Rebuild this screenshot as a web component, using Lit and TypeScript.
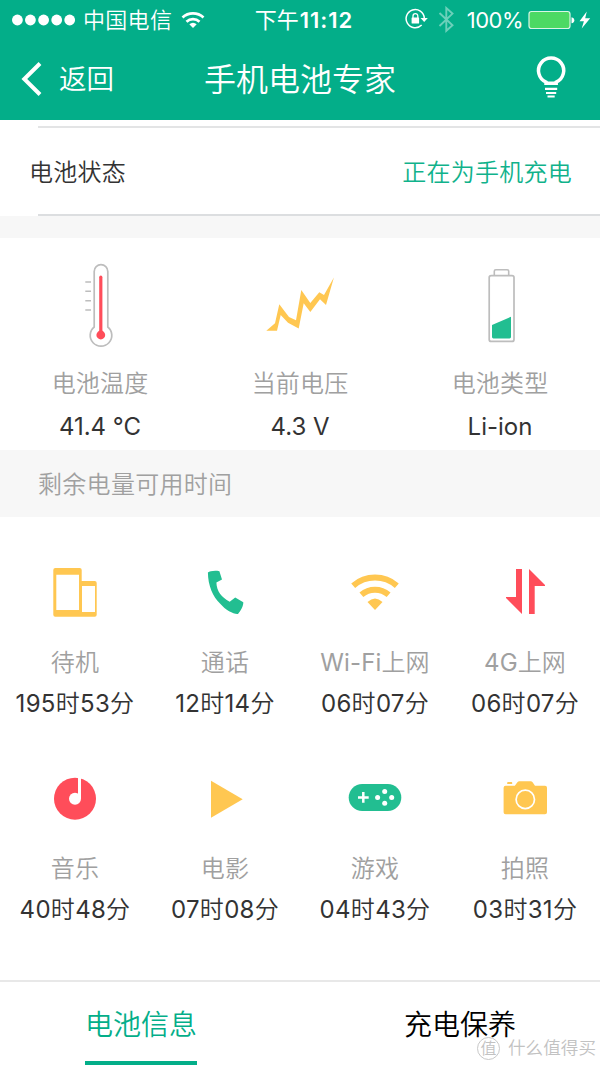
import { LitElement, html, svg, css } from "lit";
import { customElement, property } from "lit/decorators.js";

const GREY = "#bdbdbd";
const RED = "#ff4d5a";
const GREEN = "#22be91";
const AMBER = "#ffc751";

const icons: Record<string, unknown> = {
  thermometer: html`<svg width="36" height="88" viewBox="82 262 36 88" fill="none">
    <path d="M94.2 327V271.4a6.8 6.8 0 0 1 13.6 0V327a10.8 10.8 0 1 1-13.6 0Z" stroke=${GREY} stroke-width="1.7"/>
    <path d="M85.3 282h5.7M85.3 291.3h5.7M85.3 300.7h5.7M85.3 310h5.7" stroke=${GREY} stroke-width="1.6"/>
    <path d="M100.8 277.2V335" stroke=${RED} stroke-width="3.2" stroke-linecap="round"/>
    <circle cx="100.8" cy="335" r="4.4" fill=${RED}/></svg>`,
  voltage: html`<svg width="72" height="88" viewBox="264 262 72 88">
    <path fill=${AMBER} d="M266.3 330.8 275 323.3 279.3 304.3 289 317 296 320.3 301.3 290 310.3 303 319.3 292.3 324 295 333.9 277.5 326 304.9 320 299.3 310.3 312 303.7 303.3 298.7 328.4 288 322.7 280.7 315 277 330.8Z"/></svg>`,
  battery: html`<svg width="30" height="88" viewBox="485 262 30 88" fill="none">
    <path d="M494.3 275.3v-4q0-1.5 1.5-1.5h11.4q1.5 0 1.5 1.5v4" stroke=${GREY} stroke-width="1.6"/>
    <rect x="489.2" y="275.6" width="24.8" height="65.8" rx="2" stroke=${GREY} stroke-width="1.7"/>
    <path d="M492 325 511 316.7V337q0 1.4-1.4 1.4h-16.2q-1.4 0-1.4-1.4Z" fill=${GREEN}/></svg>`,
  standby: html`<svg width="60" height="60" viewBox="45 562 60 60">
    <path fill=${AMBER} fill-rule="evenodd" d="M55.3 568h24.4q2 0 2 2v11h13q2 0 2 2v31.8q0 2-2 2H55.3q-2 0-2-2V570q0-2 2-2ZM56.3 574.7V610H79V574.7ZM82 586v26H95V586Z"/></svg>`,
  call: html`<svg width="60" height="60" viewBox="195 562 60 60">
    <path fill=${GREEN} d="M207.9 572.5C209.5 571.2 214.5 570.3 219.4 571.2L222 579.5 216.4 582.5C216.6 591 221.5 597.5 229.7 601.7L235.2 597.5 243.3 602.3C243.5 606 240.5 611.5 238 613.9C234 614.5 226 610.5 220 603.5C213 597 208 585.5 207.9 572.5Z"/></svg>`,
  wifi: html`<svg width="60" height="60" viewBox="345 562 60 60">
    <path fill="none" stroke=${AMBER} stroke-width="6" d="M353.2 585.7a33.3 33.3 0 0 1 43.6 0M361.4 594.8a21 21 0 0 1 27.2 0"/>
    <path fill=${AMBER} d="M375 610 367.5 601.9q7.5-7 15 0Z"/></svg>`,
  data: html`<svg width="60" height="60" viewBox="495 562 60 60">
    <path fill=${RED} d="M516 569h6v45L506 598v-1h10ZM529 569l16 16v1H534.7v28H529Z"/></svg>`,
  music: html`<svg width="60" height="60" viewBox="45 768 60 60">
    <circle cx="75" cy="798.7" r="21" fill=${RED}/>
    <circle cx="75" cy="798.7" r="6" fill="#fff"/>
    <path d="M78 777h3v21.7h-3Z" fill="#fff"/></svg>`,
  movie: html`<svg width="60" height="60" viewBox="195 768 60 60">
    <path fill=${AMBER} d="M211 780.7 242.7 799.2 211 817.7Z"/></svg>`,
  game: html`<svg width="60" height="60" viewBox="345 768 60 60">
    <rect x="348.7" y="784" width="52.6" height="27" rx="13.5" fill=${GREEN}/>
    <path d="M358 797.4h10.7M363.3 792v10.7" stroke="#fff" stroke-width="2.5"/>
    <g fill="#fff"><circle cx="384.7" cy="791.5" r="2.5"/><circle cx="377.6" cy="797.4" r="2.5"/><circle cx="391.7" cy="797.4" r="2.5"/><circle cx="384.7" cy="803.3" r="2.5"/></g></svg>`,
  photo: html`<svg width="60" height="60" viewBox="495 768 60 60">
    <path fill=${AMBER} d="M505.5 785.7h9.3l2.6-3.4q.8-1 2-1h11.2q1.2 0 2 1l2.4 3.4H545q2 0 2 2v24.6q0 2-2 2H505.6q-2 0-2-2v-24.6q0-2 2-2ZM508 782h3.5q.7 0 .7.8v1.2h-5v-1.2q0-.8.8-.8Z"/>
    <circle cx="525.3" cy="799.4" r="9.2" fill="none" stroke="#fff" stroke-width="1.7"/></svg>`,
};

const readings = [
  { icon: "thermometer", label: "电池温度", value: "41.4 °C" },
  { icon: "voltage", label: "当前电压", value: "4.3 V" },
  { icon: "battery", label: "电池类型", value: "Li-ion" },
];

const usages = [
  { icon: "standby", label: "待机", value: "195时53分" },
  { icon: "call", label: "通话", value: "12时14分" },
  { icon: "wifi", label: "Wi-Fi上网", value: "06时07分" },
  { icon: "data", label: "4G上网", value: "06时07分" },
  { icon: "music", label: "音乐", value: "40时48分" },
  { icon: "movie", label: "电影", value: "07时08分" },
  { icon: "game", label: "游戏", value: "04时43分" },
  { icon: "photo", label: "拍照", value: "03时31分" },
];

/** Latin runs are set a little heavier than the Chinese around them. */
const mixed = (text: string) =>
  (text.match(/[\u4e00-\u9fff]+|[^\u4e00-\u9fff]+/g) ?? []).map((run) =>
    /[\u4e00-\u9fff]/.test(run) ? run : html`<span class="latin">${run}</span>`
  );

@customElement("stat-tile")
class StatTile extends LitElement {
  @property() icon = "";
  @property() label = "";
  @property() value = "";

  static styles = css`
    :host { display: flex; flex-direction: column; align-items: center; white-space: nowrap; }
    svg { display: block; }
    .latin { font-weight: 400; }
    .label, .value { height: 40px; line-height: 40px; }
    .label { margin-top: var(--label-gap, 21px); color: #a0a0a0; letter-spacing: 0.15px; }
    .value { margin-top: var(--value-gap, 1px); color: #333; letter-spacing: var(--value-spacing, 0.3px); }
  `;

  render() {
    return html`${icons[this.icon]}
      <div class="label">${mixed(this.label)}</div>
      <div class="value">${mixed(this.value)}</div>`;
  }
}

@customElement("app-root")
class AppRoot extends LitElement {
  static styles = css`
    :host {
      display: flex; flex-direction: column; position: relative;
      width: 600px; height: 1065px; overflow: hidden; background: #fff;
      font-family: Inter, "Noto Sans CJK SC", sans-serif;
      font-size: 24px; font-weight: 350; color: #333;
    }
    svg { display: block; flex: none; }
    .top { height: 120px; background: #03ae89; color: #fff; }
    .status { display: grid; grid-template-columns: 1fr auto 1fr; height: 40px; align-items: center; font-size: 22px; line-height: 40px; white-space: nowrap; }
    .carrier { display: flex; align-items: center; padding-left: 12px; height: 40px; }
    .carrier span { margin: 0 9px 0 7px; letter-spacing: 0.3px; }
    .clock { font-weight: 400; height: 40px; padding-left: 8px; }
    .clock b { font-weight: 600; letter-spacing: 1px; margin-left: 1px; }
    .indicators { display: flex; align-items: center; justify-content: flex-end; height: 40px; padding-right: 8px; }
    .percent { margin: 0 5px 0 12px; font-weight: 400; letter-spacing: -0.5px; }
    .nav { display: grid; grid-template-columns: 1fr auto 1fr; height: 80px; white-space: nowrap; }
    .back { display: flex; align-items: center; font-size: 27.5px; padding-left: 20px; gap: 16px; height: 78px; line-height: 80px; }
    .title { font-size: 32px; height: 78px; line-height: 80px; }
    .tip { display: flex; justify-content: flex-end; padding: 14px 32px 0 0; }
    .rule { height: 2px; flex: none; margin: 6px 0 0 38px; background: #e3e4e5; }
    .state { display: flex; justify-content: space-between; height: 86px; line-height: 89px; padding: 0 28px 0 29px; letter-spacing: 0.25px; }
    .charging { color: #10b28b; }
    .band-rule { height: 2px; margin: 0 0 0 38px; background: #dcdee0; }
    .band { height: 22px; background: #f7f7f7; }
    .readings { display: grid; grid-template-columns: repeat(3, 1fr); height: 188px; padding-top: 24px; --label-gap: 14px; --value-gap: 3px; --value-spacing: 0; }
    .heading { height: 67px; line-height: 69px; padding-left: 38px; background: #f7f7f7; color: #a0a0a0; letter-spacing: 0.3px; }
    .usages { display: grid; grid-template-columns: repeat(4, 1fr); grid-auto-rows: 206px; height: 418px; padding-top: 45px; }
    .tabs { display: grid; grid-template-columns: 112px 112px; column-gap: 207px; padding-left: 85px; height: 83px; border-top: 2px solid #e8e8e8; font-size: 28px; line-height: 28px; white-space: nowrap; }
    .tab { height: 54px; padding-top: 29px; color: #000; text-align: center; }
    .tab.active { color: #03ae89; box-shadow: inset 0 -4px #03ae89; }
    .mark { position: absolute; right: 4px; bottom: 4px; display: flex; align-items: center; gap: 8px; height: 26px; line-height: 26px; color: #c2c2c2; font-size: 17.6px; }
    .seal { width: 21px; height: 21px; line-height: 20px; border: 1px solid #c8c8c8; border-radius: 50%; text-align: center; font-size: 16px; }
  `;

  render() {
    return html`
      <header class="top">
        <div class="status">
          <div class="carrier">
            <svg width="64" height="12" viewBox="12 13 64 12" fill="#fff">
              ${[17.4, 30.4, 43.6, 56.7, 69.7].map((x) => svg`<circle cx=${x} cy="19" r="5.4"/>`)}
            </svg>
            <span>中国电信</span>
            <svg width="24" height="18" viewBox="181.5 10 24 18">
              <g fill="none" stroke="#fff" stroke-width="2.7"><path d="M183 16.4a15.5 15.5 0 0 1 21 0M187 20.7a9.5 9.5 0 0 1 13 0"/></g>
              <path d="M193.5 27 189.8 23.3q3.7-3 7.4 0Z" fill="#fff"/>
            </svg>
          </div>
          <div class="clock">下午<b>11:12</b></div>
          <div class="indicators">
            <svg width="50" height="28" viewBox="405 6 50 28" fill="none">
              <path d="M424.3 18a9.1 9.1 0 1 0-2.6 7" stroke="#fff" stroke-width="1.5"/>
              <path d="M420.5 18h7.3l-3.6 3.9Z" fill="#fff"/>
              <rect x="411.6" y="17.5" width="7.5" height="6" rx=".6" fill="#fff"/>
              <path d="M413 18v-2a2.4 2.4 0 0 1 4.8 0v2" stroke="#fff" stroke-width="1.3"/>
              <path d="M439.5 13 452.5 25.3 446.3 30.8V8L452.5 13.6 439.5 26" stroke="#fff" stroke-opacity=".42" stroke-width="1.9"/>
            </svg>
            <span class="percent">100%</span>
            <svg width="64" height="20" viewBox="528.5 9 64 20">
              <rect x="529.5" y="10.5" width="41" height="17" rx="2.5" fill="#4cd964" stroke="#d9f5e4" stroke-width="1.2"/>
              <path d="M572 16.2q2.8.5 2.8 3t-2.8 3Z" fill="#fff"/>
              <path d="M587.3 10.5 580 20.3h4.4L582.2 27.5 590.7 17.3H585.7Z" fill="#fff"/>
            </svg>
          </div>
        </div>
        <div class="nav">
          <div class="back">
            <svg width="23" height="36" viewBox="20 61 23 36"><path d="M40 63.5 24.3 79 40 94.5" fill="none" stroke="#fff" stroke-width="4"/></svg>
            <span>返回</span>
          </div>
          <div class="title">手机电池专家</div>
          <div class="tip">
            <svg width="34" height="46" viewBox="534.3 54 34 46" fill="none" stroke="#fff">
              <path d="M546.3 83.2v-1.1a12.6 12.6 0 1 1 10.2 0v1.1Z" stroke-width="3.5"/>
              <path d="M545.3 88.8h12.2M546.3 93h10.2M547.8 96.5h7.2" stroke-width="2.2"/>
            </svg>
          </div>
        </div>
      </header>
      <div class="rule"></div>
      <div class="state"><span>电池状态</span><span class="charging">正在为手机充电</span></div>
      <div class="band-rule"></div>
      <div class="band"></div>
      <section class="readings">
        ${readings.map((r) => html`<stat-tile .icon=${r.icon} .label=${r.label} .value=${r.value}></stat-tile>`)}
      </section>
      <div class="heading">剩余电量可用时间</div>
      <section class="usages">
        ${usages.map((u) => html`<stat-tile .icon=${u.icon} .label=${u.label} .value=${u.value}></stat-tile>`)}
      </section>
      <nav class="tabs">
        <div class="tab active">电池信息</div>
        <div class="tab">充电保养</div>
      </nav>
      <div class="mark"><span class="seal">值</span><span>什么值得买</span></div>
    `;
  }
}
